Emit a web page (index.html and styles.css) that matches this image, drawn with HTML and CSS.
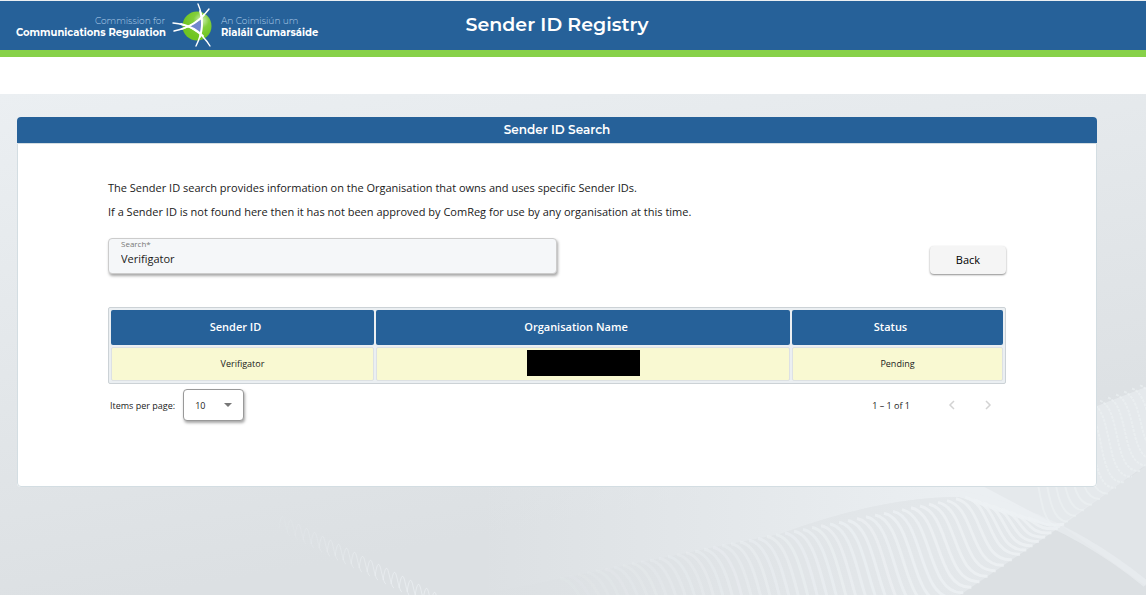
FILE: index.html
```html
<!DOCTYPE html>
<html lang="en">
<head>
    <meta charset="UTF-8">
    <meta name="viewport" content="width=device-width, initial-scale=1.0">
    <title>Sender ID Registry</title>
    <link rel="stylesheet" href="styles.css">
</head>
<body>
    <header class="site-header">
        <a class="logo" href="#">
            <span class="logo-text logo-left">Commission for<b>Communications Regulation</b></span>
            <svg class="logo-mark" viewBox="0 0 42 46" aria-hidden="true">
                <defs>
                    <radialGradient id="ball" cx="65%" cy="30%" r="60%">
                        <stop offset="0" stop-color="#d5f0bd"/>
                        <stop offset="0.45" stop-color="#83cf3c"/>
                        <stop offset="1" stop-color="#70c522"/>
                    </radialGradient>
                </defs>
                <circle cx="25" cy="23" r="14.5" fill="url(#ball)"/>
                <path d="M17 24 L30 16 L30 31 Z" fill="#7288ce"/>
                <g fill="none" stroke="#fff" stroke-linecap="round">
                    <path d="M26 1 Q35 21 24 43" stroke-width="1.4"/>
                    <path d="M28 8 Q32 21 28 34" stroke-width="1.8"/>
                    <path d="M1 20 Q25 22 38 43" stroke-width="1.4"/>
                    <path d="M9 21 Q22 24 31 33" stroke-width="1.8"/>
                    <path d="M37 6 Q23 24 2 28" stroke-width="1.4"/>
                    <path d="M32 12 Q23 22 10 26" stroke-width="1.8"/>
                </g>
            </svg>
            <span class="logo-text">An Coimisiún um<b>Rialáil Cumarsáide</b></span>
        </a>
        <h1>Sender ID Registry</h1>
    </header>
    <div class="nav-strip"></div>

    <main class="page">
        <svg class="waves" viewBox="0 0 1146 501" preserveAspectRatio="xMaxYMax slice" aria-hidden="true">
            <defs>
                <linearGradient id="fold" gradientUnits="userSpaceOnUse" x1="480" y1="0" x2="960" y2="0">
                    <stop offset="0" stop-color="#ebeff2" stop-opacity="0"/>
                    <stop offset="1" stop-color="#ebeff2"/>
                </linearGradient>
            </defs>
            <path d="M480 380 L960 380 L1060 433 Q1015 427 960 403 Q880 403 780 440 L480 501 Z" fill="url(#fold)"/>
            <path d="M480 501 L780 440 Q880 403 960 403 Q1015 427 1060 433 L960 501 Z" fill="url(#fold)" opacity="0.5"/>
            <path d="M960 403 L960 380 L1097 312 L1146 293 L1146 371 L1060 433 Z" fill="#ebeff2" opacity="0.6"/>
            <path d="M1060 431 L1146 372 L1146 492 Z" fill="#ebeff2" opacity="0.35"/>
            <path d="M960 400 Q1060 420 1146 490" fill="none" stroke="#ebeff2" stroke-width="7" opacity="0.6"/>
            <g id="ribs" fill="none" stroke="#edf1f4"></g>
        </svg>

        <section class="card">
            <h2>Sender ID Search</h2>
            <div class="card-body">
                <p>The Sender ID search provides information on the Organisation that owns and uses specific Sender IDs.</p>
                <p>If a Sender ID is not found here then it has not been approved by ComReg for use by any organisation at this time.</p>

                <form class="search-row">
                    <div class="field">
                        <label for="search">Search*</label>
                        <input type="text" id="search" value="Verifigator">
                    </div>
                    <button type="button" class="back">Back</button>
                </form>

                <table>
                    <colgroup>
                        <col class="col-sender">
                        <col>
                        <col class="col-status">
                    </colgroup>
                    <thead>
                        <tr><th>Sender ID</th><th>Organisation Name</th><th>Status</th></tr>
                    </thead>
                    <tbody>
                        <tr><td>Verifigator</td><td><span class="redacted"></span></td><td>Pending</td></tr>
                    </tbody>
                </table>

                <div class="paginator">
                    <label for="page-size">Items per page:</label>
                    <div class="select-wrap">
                        <select id="page-size">
                            <option>10</option>
                            <option>25</option>
                            <option>50</option>
                        </select>
                    </div>
                    <span class="range">1 – 1 of 1</span>
                    <button type="button" class="page-btn" aria-label="Previous page" disabled>
                        <svg viewBox="0 0 8 10"><path d="M6 1 L2 5 L6 9"/></svg>
                    </button>
                    <button type="button" class="page-btn" aria-label="Next page" disabled>
                        <svg viewBox="0 0 8 10"><path d="M2 1 L6 5 L2 9"/></svg>
                    </button>
                </div>
            </div>
        </section>
    </main>

    <script src="waves.js"></script>
</body>
</html>
```

FILE: styles.css
```css
* {
    box-sizing: border-box;
}
body {
    margin: 0;
    min-height: 100vh;
    display: flex;
    flex-direction: column;
    font-family: "Open Sans", sans-serif;
    font-size: 11px;
    color: #1a1a1a;
    background: #fff;
}

/* Header */
.site-header {
    display: grid;
    grid-template-columns: 1fr auto 1fr;
    align-items: center;
    height: 57px;
    padding: 0 16px;
    background: #266199;
    border-top: 1px solid #ebeff2;
    border-bottom: 7px solid #87d149;
    font-family: Montserrat, Inter, sans-serif;
}
.site-header h1 {
    margin: 0 0 2px;
    padding-right: 32px;
    font-size: 19px;
    font-weight: 600;
    color: #fff;
}
.logo {
    display: flex;
    align-items: center;
    color: #b4d0ea;
    text-decoration: none;
    white-space: nowrap;
}
.logo-text {
    font-size: 9px;
    font-weight: 300;
    line-height: 12px;
    padding-top: 3px;
}
.logo-text b {
    display: block;
    font-size: 10px;
    font-weight: 700;
    color: #fff;
}
.logo-left {
    width: 149px;
    text-align: right;
}
.logo-mark {
    width: 42px;
    height: 46px;
    margin: 0 7px;
}
.nav-strip {
    height: 37px;
}

/* Page */
.page {
    position: relative;
    flex: 1;
    padding: 23px 49px 23px 17px;
    background: linear-gradient(170deg, #ebeff2, #e3e7ea 40%, #dce0e3 75%);
}
.waves {
    position: absolute;
    inset: 0;
    width: 100%;
    height: 100%;
}
.card {
    position: relative;
    border-radius: 4px;
    background: #fff;
}
.card h2 {
    margin: 0;
    border-radius: 4px 4px 0 0;
    background: #266199;
    color: #fff;
    font-family: Montserrat, Inter, sans-serif;
    font-size: 12px;
    font-weight: 600;
    line-height: 26px;
    text-align: center;
}
.card-body {
    min-height: 344px;
    padding: 32px 90px;
    border: 1px solid #d3dde2;
    border-radius: 0 0 4px 4px;
}
.card-body p {
    margin: 0;
    line-height: 24px;
}

/* Search */
.search-row {
    display: flex;
    justify-content: space-between;
    align-items: flex-end;
    margin-top: 14px;
}
.field {
    width: 50%;
    height: 36px;
    padding: 0 12px;
    border: 1px solid #ccc;
    border-radius: 4px;
    background: #f5f7f9;
    box-shadow: 1px 2px 3px rgba(0, 0, 0, 0.35);
}
.field label {
    display: block;
    font-size: 8px;
    line-height: 10px;
    color: #777;
}
.field input {
    display: block;
    width: 100%;
    height: 18px;
    padding: 0;
    border: 0;
    outline: 0;
    background: none;
    font: inherit;
    color: #1a1a1a;
}
.back {
    width: 76px;
    height: 28px;
    padding: 0 0 2px;
    border: 0;
    border-radius: 4px;
    background: #f5f5f5;
    box-shadow: 0 1px 2px rgba(0, 0, 0, 0.45);
    font: inherit;
    color: #000;
}

/* Results */
table {
    width: 100%;
    margin-top: 33px;
    table-layout: fixed;
    border: 1px solid #ccd2d6;
    border-radius: 2px;
    border-spacing: 2px;
    background: #ebeff2;
    text-align: center;
}
.col-sender {
    width: 263px;
}
.col-status {
    width: 211px;
}
th {
    height: 35px;
    padding: 0 14px 2px 0;
    border-radius: 2px;
    background: #266199;
    color: #fff;
    font-weight: 600;
}
td {
    height: 34px;
    padding: 0 0 2px;
    border: 1px solid #dde1e4;
    border-radius: 2px;
    background: #f9f9d2;
    font-size: 9px;
}
.redacted {
    display: block;
    width: 113px;
    height: 26px;
    margin: 0 auto;
    background: #000;
}

/* Paginator */
.paginator {
    display: flex;
    align-items: center;
    margin-top: 5px;
    padding-left: 2px;
    font-size: 9px;
}
.select-wrap {
    position: relative;
    margin: 0 auto 0 8px;
}
.select-wrap::after {
    content: "";
    position: absolute;
    top: 14px;
    right: 12px;
    border: 4px solid transparent;
    border-top-color: #777;
    border-bottom: 0;
    pointer-events: none;
}
.select-wrap select {
    display: block;
    width: 61px;
    height: 32px;
    padding: 0 11px;
    appearance: none;
    border: 1px solid #999;
    border-radius: 4px;
    background: #fff;
    box-shadow: 1px 2px 3px rgba(0, 0, 0, 0.35);
    font: inherit;
    color: #1a1a1a;
}
.range {
    margin-right: 24px;
}
.page-btn {
    width: 36px;
    height: 32px;
    padding: 0;
    border: 0;
    background: none;
}
.page-btn svg {
    display: block;
    width: 8px;
    height: 10px;
    margin: 0 auto;
    fill: none;
    stroke: #d3d3d3;
    stroke-width: 1.5;
}
```

FILE: waves.js
```js
// Draws the curved ribs of the background
const ribs = document.getElementById("ribs");

function addRib(d, width, opacity, dash) {
    const path = document.createElementNS("http://www.w3.org/2000/svg", "path");
    path.setAttribute("d", d);
    path.setAttribute("stroke-width", width);
    path.setAttribute("opacity", opacity);
    if (dash) {
        path.setAttribute("stroke-dasharray", dash);
    }
    ribs.appendChild(path);
}

// Main fold, fading out to the left
for (let x = 560; x < 1036; x += 9) {
    const y = x < 965 ? 403 + (965 - x) * 0.2 : 403 + (x - 965) * 0.33;
    const endX = x < 965 ? x + 55 + (965 - x) * 0.1 : x + 55 - (x - 965) * 0.3;
    const endY = 501 - (endX - 960) * 0.68;
    const lean = (endX - x) / 2;
    addRib(`M${x} ${y} C${x + lean} ${y + 6} ${x + lean * 0.8} ${endY + 2} ${endX} ${endY}`,
        3, Math.min(0.8, 0.1 + (x - 560) * 0.002));
}

// Upper right fold
for (let x = 1020; x < 1150; x += 8) {
    const y = 337 - (x - 1020) * 0.38;
    const endX = x + 40;
    const endY = 433 - (endX - 1060) * 0.7;
    addRib(`M${x} ${y} C${x + 22} ${y + 8} ${x + 12} ${endY + 2} ${endX} ${endY}`,
        2, 0.6, x > 1070 ? "3 1" : "");
}

// Small loops at the lower left
for (let i = 0; i < 20; i++) {
    const x = 282 + i * 8;
    const y = 424 + i * 4;
    addRib(`M${x - 3} ${y + 10} Q${x} ${y - 10} ${x + 3} ${y + 4} T${x + 8} ${y + 18}`,
        1, Math.min(0.7, 0.1 + i * 0.04));
}
```
